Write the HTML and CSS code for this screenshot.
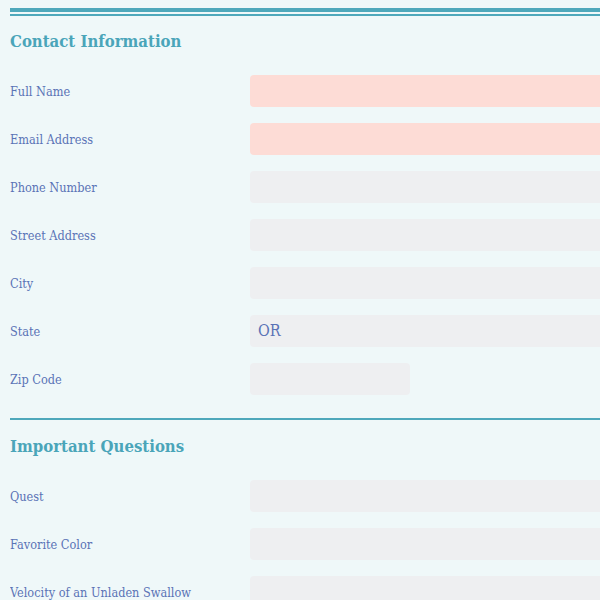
FILE: index.html
```html
<!DOCTYPE html>
<html lang="en">
<head>
<meta charset="utf-8">
<title>Form</title>
<link rel="stylesheet" href="styles.css">
</head>
<body>
<form class="form">
  <section class="section">
    <div class="rule-double"><div class="bar-thick"></div><div class="bar-thin"></div></div>
    <h2 class="section-title">Contact Information</h2>
    <div class="row"><label class="label">Full Name</label><div class="field field-error"></div></div>
    <div class="row"><label class="label">Email Address</label><div class="field field-error"></div></div>
    <div class="row"><label class="label">Phone Number</label><div class="field"></div></div>
    <div class="row"><label class="label">Street Address</label><div class="field"></div></div>
    <div class="row"><label class="label">City</label><div class="field"></div></div>
    <div class="row"><label class="label">State</label><div class="field">OR</div></div>
    <div class="row"><label class="label">Zip Code</label><div class="field field-short"></div></div>
  </section>
  <section class="section section-ruled">
    <h2 class="section-title">Important Questions</h2>
    <div class="row"><label class="label">Quest</label><div class="field"></div></div>
    <div class="row"><label class="label">Favorite Color</label><div class="field"></div></div>
    <div class="row"><label class="label">Velocity of an Unladen Swallow</label><div class="field"></div></div>
  </section>
</form>
</body>
</html>
```
FILE: styles.css
```css
html { overflow: hidden; }
body {
  margin: 0;
  padding: 8px 0 0 10px;
  background: #eff8f9;
  font-family: "DejaVu Serif Condensed", "DejaVu Serif", serif;
  font-stretch: condensed;
  color: #5a73b6;
}
.form { overflow: hidden; }
.rule-double { display: flex; flex-direction: column; gap: 2px; }
.bar-thick { height: 4px; background: #4ea8bb; }
.bar-thin { height: 2px; background: #4ea8bb; }
.section-ruled { margin-top: 23px; border-top: 2px solid #4ea8bb; }
.section-title {
  margin: 13px 0 22px;
  font-size: 16.6px;
  line-height: 24px;
  font-weight: bold;
  color: #4aa5b9;
}
.section-ruled .section-title { margin-top: 14px; }
.row {
  display: grid;
  grid-template-columns: 240px 1fr;
  align-items: center;
  margin-bottom: 16px;
}
.section:last-child .row:last-child { margin-bottom: 0; }
.section:first-child .row:last-child { margin-bottom: 0; }
.label { font-size: 12.6px; }
.field {
  height: 32px;
  border-radius: 4px 0 0 4px;
  background: #eeeff1;
  padding: 0 8px;
  box-sizing: border-box;
  font-size: 16px;
  line-height: 32px;
}
.field-error { background: #fddcd6; }
.field-short { width: 160px; border-radius: 4px; }
```
